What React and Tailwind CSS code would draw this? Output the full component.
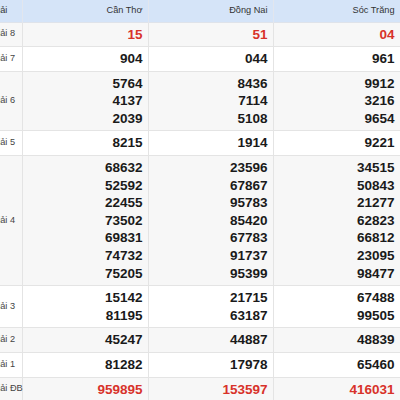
const rows = [
  { label: 'Giải 8', red: true, cols: [['15'], ['51'], ['04']] },
  { label: 'Giải 7', cols: [['904'], ['044'], ['961']] },
  { label: 'Giải 6', cols: [['5764', '4137', '2039'], ['8436', '7114', '5108'], ['9912', '3216', '9654']] },
  { label: 'Giải 5', cols: [['8215'], ['1914'], ['9221']] },
  {
    label: 'Giải 4',
    cols: [
      ['68632', '52592', '22455', '73502', '69831', '74732', '75205'],
      ['23596', '67867', '95783', '85420', '67783', '91737', '95399'],
      ['34515', '50843', '21277', '62823', '66812', '23095', '98477'],
    ],
  },
  { label: 'Giải 3', cols: [['15142', '81195'], ['21715', '63187'], ['67488', '99505']] },
  { label: 'Giải 2', cols: [['45247'], ['44887'], ['48839']] },
  { label: 'Giải 1', cols: [['81282'], ['17978'], ['65460']] },
  { label: 'Giải ĐB', red: true, cols: [['959895'], ['153597'], ['416031']] },
]

const provinces = ['Cần Thơ', 'Đồng Nai', 'Sóc Trăng']

export default function App() {
  return (
    <div className="w-[400px] h-[400px] overflow-hidden bg-white font-['Liberation_Sans',Arial,sans-serif]">
      <table className="-ml-[17px] table-fixed border-collapse w-[417px]">
        <colgroup>
          <col className="w-[39px]" />
          <col className="w-[126px]" />
          <col className="w-[125px]" />
          <col className="w-[127px]" />
        </colgroup>
        <thead>
          <tr className="h-[22px] bg-[#d5e4f8] border-b border-[#dfe3ea]">
            <th className="pl-[8px] text-left font-normal text-[9.2px] text-[#333] border-r border-[#e2e6ee]">
              Giải
            </th>
            {provinces.map((p) => (
              <th key={p} className="pr-[5px] text-right font-normal text-[9.2px] text-[#333] border-r border-[#e2e6ee]">
                {p}
              </th>
            ))}
          </tr>
        </thead>
        <tbody>
          {rows.map((row, i) => (
            <tr key={row.label} className={`border-b border-[#e4e4e4] ${i % 2 === 0 ? 'bg-[#f7f7f7]' : 'bg-white'}`}>
              <td className="pl-[8px] text-[9.2px] text-[#444] whitespace-nowrap border-r border-[#e4e4e4] align-middle">
                {row.label}
              </td>
              {row.cols.map((nums, j) => (
                <td key={j} className="pr-[5px] py-[3px] text-right border-r border-[#e4e4e4] align-middle">
                  {nums.map((n) => (
                    <div
                      key={n}
                      className={`leading-[17.6px] text-[13.5px] font-bold ${row.red ? 'text-[#d8322a]' : 'text-[#1a1a1a]'}`}
                    >
                      {n}
                    </div>
                  ))}
                </td>
              ))}
            </tr>
          ))}
        </tbody>
      </table>
    </div>
  )
}
